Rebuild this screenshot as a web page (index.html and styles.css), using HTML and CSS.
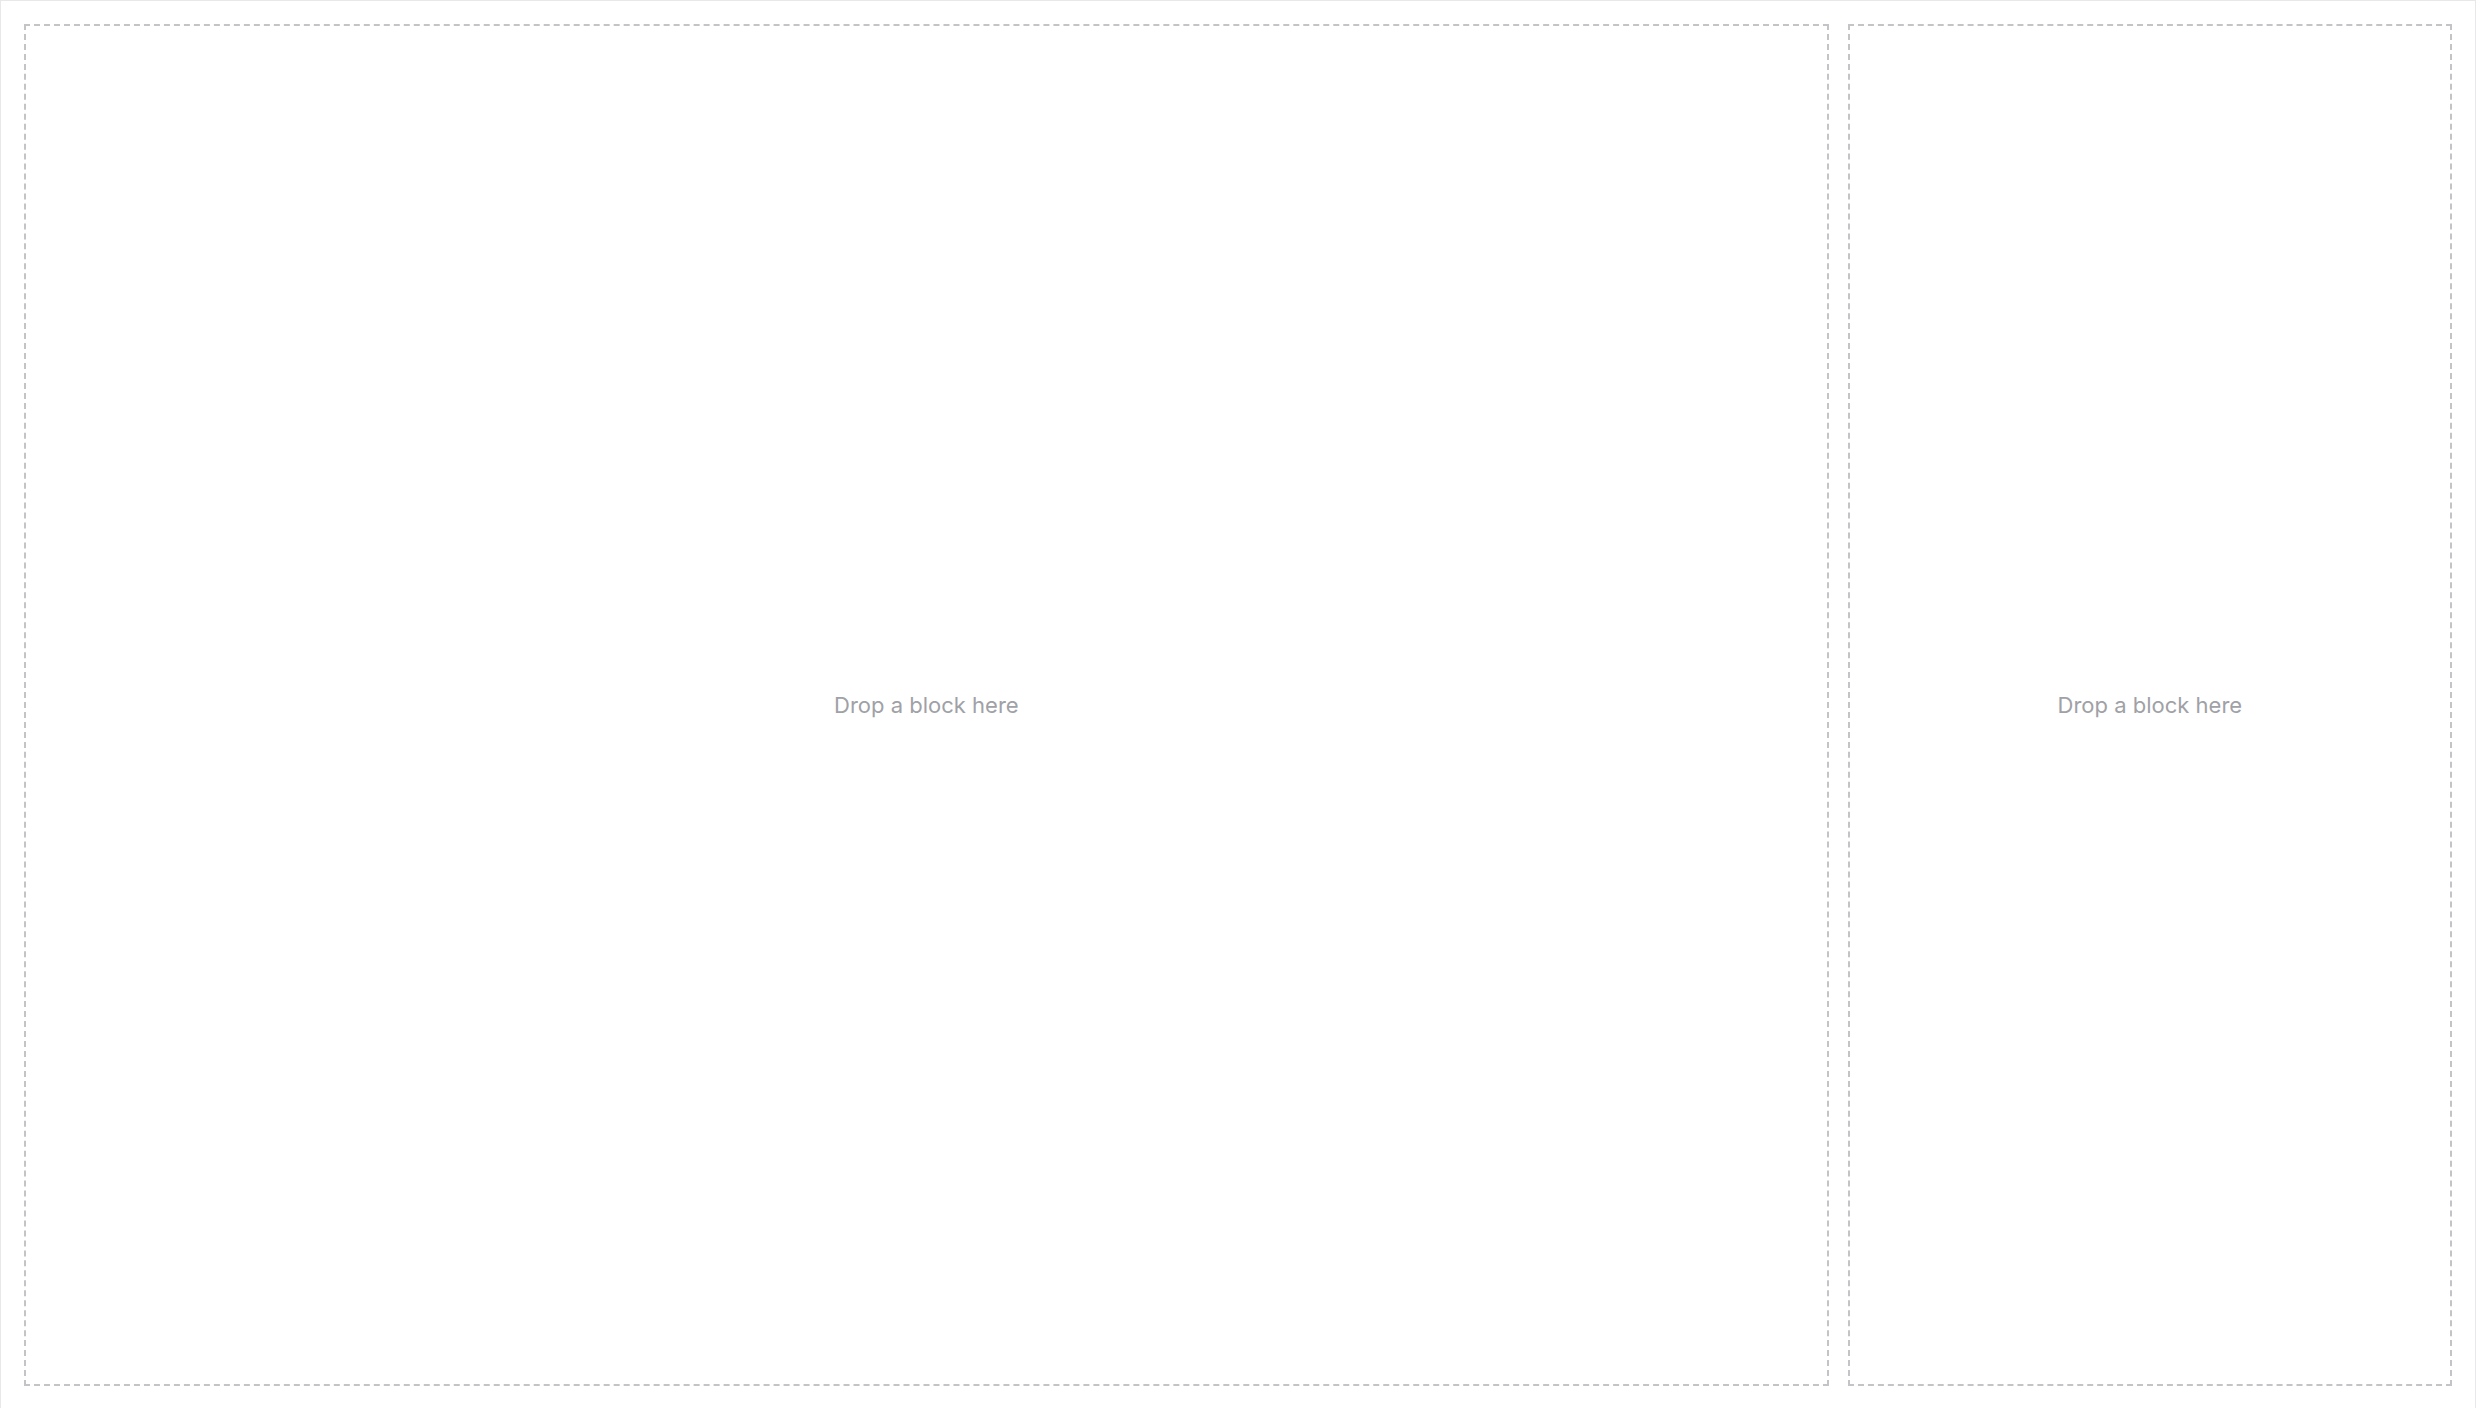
FILE: index.html
```html
<!doctype html>
<html lang="en">

<head>
    <title>Layout</title>
    <meta charset="utf-8">
    <link rel="stylesheet" href="styles.css">
</head>

<body>
    <div id="ramme">
        <div class="sone hoved">
            <p class="hint">Drop a block here</p>
        </div>
        <div class="sone side">
            <p class="hint">Drop a block here</p>
        </div>
    </div>
</body>

</html>
```

FILE: styles.css
```css
body {
    margin: 0;
    background-color: white;
    font-family: Inter, 'Noto Sans', sans-serif;
}

#ramme {
    box-sizing: border-box;
    height: 1408px;
    border: 1px solid rgb(232, 232, 234);
    border-bottom: none;
    padding: 23px 23px 22px 23px;
    display: flex;
    gap: 19px;
}

.sone {
    box-sizing: border-box;
    border: 2px dashed rgb(196, 196, 200);
    display: flex;
    align-items: center;
    justify-content: center;
}

.hoved {
    flex: 3;
}

.side {
    flex: 1;
}

.hint {
    margin: 0;
    font-size: 22px;
    color: rgb(160, 161, 166);
}
```
